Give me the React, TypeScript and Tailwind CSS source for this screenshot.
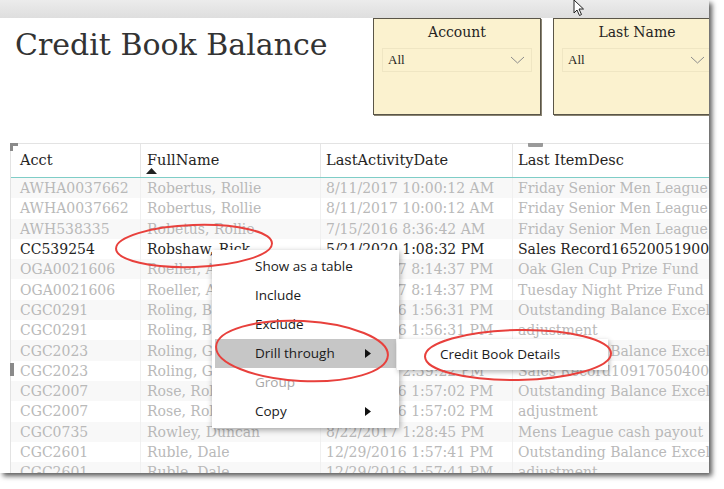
import React from 'react';

type Row = {
  acct: string;
  name: string;
  date: string;
  desc: string;
  active?: boolean;
};

const rows: Row[] = [
  { acct: 'AWHA0037662', name: 'Robertus, Rollie', date: '8/11/2017 10:00:12 AM', desc: 'Friday Senior Men League Fee' },
  { acct: 'AWHA0037662', name: 'Robertus, Rollie', date: '8/11/2017 10:00:12 AM', desc: 'Friday Senior Men League Fee' },
  { acct: 'AWH538335', name: 'Robetus, Rollie', date: '7/15/2016 8:36:42 AM', desc: 'Friday Senior Men League Fee' },
  { acct: 'CC539254', name: 'Robshaw, Rick', date: '5/21/2020 1:08:32 PM', desc: 'Sales Record1652005190000', active: true },
  { acct: 'OGA0021606', name: 'Roeller, Amy', date: '11/14/2017 8:14:37 PM', desc: 'Oak Glen Cup Prize Fund' },
  { acct: 'OGA0021606', name: 'Roeller, Amy', date: '11/14/2017 8:14:37 PM', desc: 'Tuesday Night Prize Fund' },
  { acct: 'CGC0291', name: 'Roling, Bob', date: '12/29/2016 1:56:31 PM', desc: 'Outstanding Balance Excel' },
  { acct: 'CGC0291', name: 'Roling, Bob', date: '12/29/2016 1:56:31 PM', desc: 'adjustment' },
  { acct: 'CGC2023', name: 'Roling, Greg', date: '12/29/2016 1:56:45 PM', desc: 'Outstanding Balance Excel' },
  { acct: 'CGC2023', name: 'Roling, Greg', date: '9/17/2017 2:39:22 PM', desc: 'Sales Record1091705040021' },
  { acct: 'CGC2007', name: 'Rose, Robert', date: '12/29/2016 1:57:02 PM', desc: 'Outstanding Balance Excel' },
  { acct: 'CGC2007', name: 'Rose, Robert', date: '12/29/2016 1:57:02 PM', desc: 'adjustment' },
  { acct: 'CGC0735', name: 'Rowley, Duncan', date: '8/22/2017 1:28:45 PM', desc: 'Mens League cash payout' },
  { acct: 'CGC2601', name: 'Ruble, Dale', date: '12/29/2016 1:57:41 PM', desc: 'Outstanding Balance Excel' },
  { acct: 'CGC2601', name: 'Ruble, Dale', date: '12/29/2016 1:57:41 PM', desc: 'adjustment' },
];

const serif = "font-['DejaVu_Serif','Liberation_Serif',serif]";
const ui = "font-['Open_Sans','Noto_Sans',sans-serif]";

const Slicer: React.FC<{ title: string }> = ({ title }) => (
  <div className="w-[168px] h-[97px] shrink-0 bg-[#fbf2cf] border border-[#5a5548] shadow-[1px_1px_0_#8a8472] flex flex-col">
    <div className={`${serif} text-[14px] text-[#252423] text-center leading-none pt-[6px] h-[29px]`}>{title}</div>
    <div className="mx-[8px] h-[24px] border border-[#efe6c3] flex items-center justify-between pl-[5px] pr-[6px]">
      <span className="font-['Liberation_Serif',serif] text-[13px] text-[#252423]">All</span>
      <svg width="15" height="8" viewBox="0 0 15 8">
        <path d="M1 1 L7.5 7 L14 1" fill="none" stroke="#8c8c8c" strokeWidth="1" />
      </svg>
    </div>
  </div>
);

const Arrow = () => (
  <svg width="6" height="9" viewBox="0 0 6 9">
    <path d="M0 0 L6 4.5 L0 9 Z" fill="#111" />
  </svg>
);

const menuItems = [
  { label: 'Show as a table' },
  { label: 'Include' },
  { label: 'Exclude' },
  { label: 'Drill through', sub: true, hot: true },
  { label: 'Group', disabled: true },
  { label: 'Copy', sub: true },
];

const App: React.FC = () => {
  return (
    <div className="relative w-[724px] h-[489px] bg-white overflow-hidden">
      <div className="relative w-[709px] h-[473px] bg-white overflow-hidden shadow-[3px_3px_5px_rgba(0,0,0,0.65)] flex flex-col">
        <div className="h-[18px] shrink-0 bg-gradient-to-b from-[#ececec] to-[#dedede]" />

        <div className="h-[125px] shrink-0 flex items-start">
          <h1 className={`${serif} text-[30px] leading-none text-[#333] ml-[15px] mt-[12px] font-normal w-[358px] shrink-0 whitespace-nowrap`}>
            Credit Book Balance
          </h1>
          <div className="flex gap-[12px]">
            <Slicer title="Account" />
            <Slicer title="Last Name" />
          </div>
        </div>

        {/* table visual */}
        <div className="relative ml-[10px] border-t border-l border-[#e3e3e3] flex-1">
          <div className="absolute -left-[1px] -top-[1px] w-[8px] h-[8px] border-l-[3px] border-t-[3px] border-[#8a8a8a]" />
          <div className="absolute left-[517px] -top-[1px] w-[15px] h-[4px] bg-[#9a9a9a] rounded-b-[1px]" />
          <div className="absolute -left-[1px] top-[219px] w-[4px] h-[13px] bg-[#8a8a8a]" />

          <div className={`${serif} text-[14.5px] text-[#252423] grid grid-cols-[129px_180px_192px_1fr] h-[34px] border-b border-[#7fcdc7]`}>
            <div className="pl-[9px] pt-[6px]">Acct</div>
            <div className="relative pl-[6px] pt-[6px] border-l border-[#e6e6e6]">
              FullName
              <svg className="absolute left-[5px] top-[24px]" width="11" height="6" viewBox="0 0 11 6">
                <path d="M0 6 L5.5 0 L11 6 Z" fill="#222" />
              </svg>
            </div>
            <div className="pl-[5px] pt-[6px] border-l border-[#e6e6e6]">LastActivityDate</div>
            <div className="pl-[5px] pt-[6px] border-l border-[#e6e6e6] whitespace-nowrap">Last ItemDesc</div>
          </div>

          {rows.map((r, i) => (
            <div
              key={i}
              className={`${serif} text-[14px] leading-none grid grid-cols-[129px_180px_192px_1fr] h-[20.3px] items-center whitespace-nowrap ${
                i % 2 === 0 ? 'bg-[#f8f8f8]' : 'bg-white'
              } ${r.active ? 'text-[#252423]' : 'text-[#b9b9b9]'}`}
            >
              <div className="pl-[9px] overflow-hidden">{r.acct}</div>
              <div className="pl-[6px] overflow-hidden border-l border-[#f0f0f0] h-full flex items-center">{r.name}</div>
              <div className="pl-[5px] overflow-hidden border-l border-[#f0f0f0] h-full flex items-center">{r.date}</div>
              <div className="pl-[5px] overflow-hidden border-l border-[#f0f0f0] h-full flex items-center">{r.desc}</div>
            </div>
          ))}
        </div>

        {/* right-click menu */}
        <div className={`${ui} absolute left-[212px] top-[250px] w-[187px] bg-white shadow-[1px_2px_6px_rgba(0,0,0,0.35)] py-[2px] text-[13.5px]`}>
          {menuItems.map((m) => (
            <div
              key={m.label}
              className={`h-[29px] mx-[3px] flex items-center justify-between pl-[40px] pr-[25px] ${
                m.hot ? 'bg-[#c6c6c6]' : ''
              } ${m.disabled ? 'text-[#a8a8a8]' : 'text-[#1a1a1a]'}`}
            >
              <span>{m.label}</span>
              {m.sub && <Arrow />}
            </div>
          ))}
        </div>

        <div className={`${ui} absolute left-[397px] top-[339px] w-[211px] h-[31px] bg-white shadow-[1px_2px_5px_rgba(0,0,0,0.3)] flex items-center pl-[43px] text-[13.5px] text-[#1a1a1a]`}>
          Credit Book Details
        </div>

        {/* red callouts */}
        <svg className="absolute left-0 top-0 pointer-events-none" width="709" height="473" viewBox="0 0 709 473">
          <g fill="none" stroke="#e8403c" strokeWidth="2">
            <ellipse cx="194" cy="246" rx="78" ry="21" transform="rotate(-2 194 246)" />
            <ellipse cx="302" cy="351" rx="86" ry="30" transform="rotate(3 302 351)" />
            <ellipse cx="518" cy="355" rx="93" ry="25" transform="rotate(-1 518 355)" />
          </g>
        </svg>
      </div>

      {/* mouse pointer */}
      <svg className="absolute left-[573px] top-[-1px]" width="14" height="18" viewBox="0 0 14 18">
        <path d="M1 1 L1 14 L4 11 L6.5 16.5 L8.5 15.5 L6 10 L10.5 10 Z" fill="#fff" stroke="#222" strokeWidth="1" strokeLinejoin="round" />
      </svg>
    </div>
  );
};

export default App;
